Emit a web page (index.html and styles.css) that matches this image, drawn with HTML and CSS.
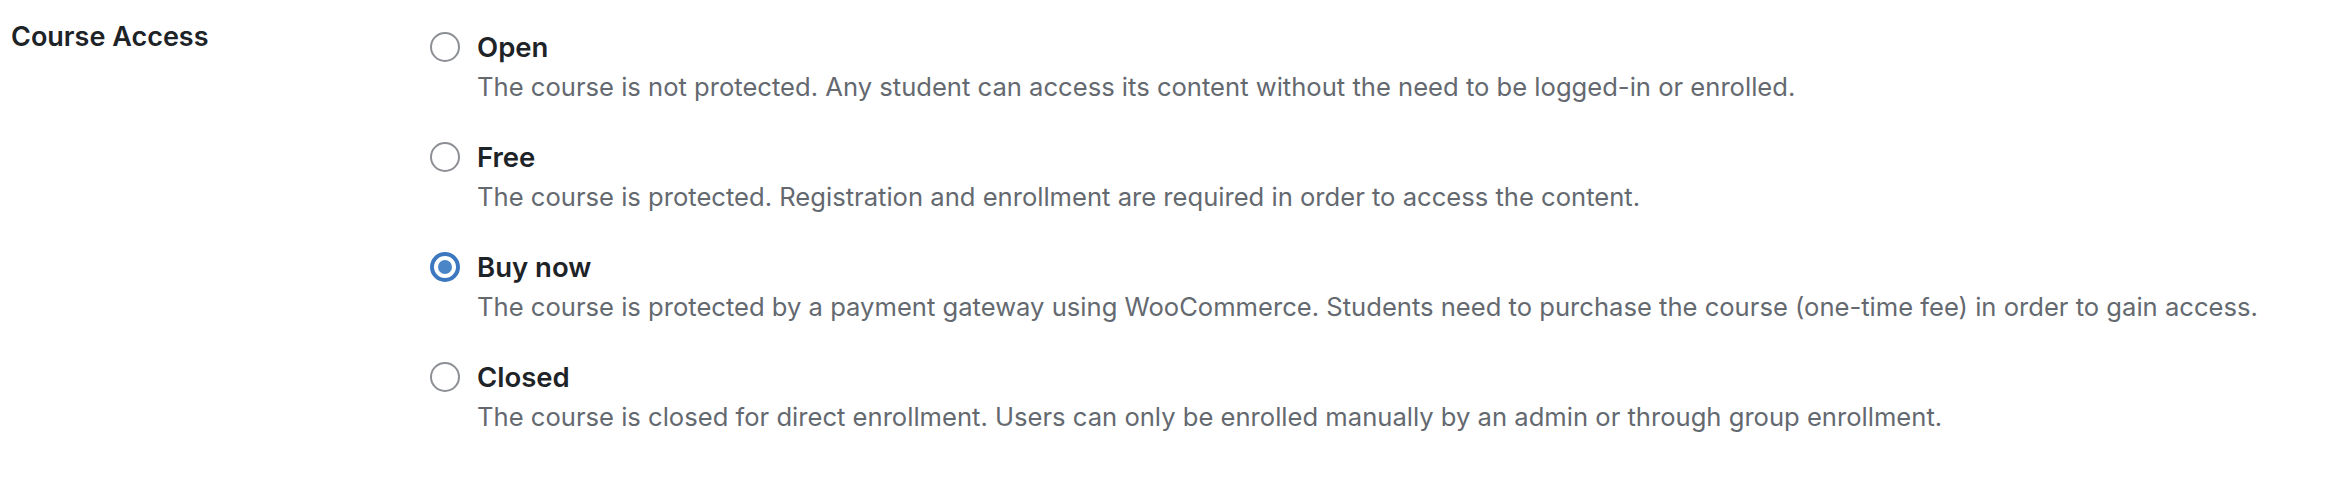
FILE: index.html
```html
<!DOCTYPE html>
<html lang="en">
<head>
<meta charset="utf-8">
<title>Course Access</title>
<link rel="stylesheet" href="styles.css">
</head>
<body>
<div class="setting">
  <div class="setting-label">Course Access</div>
  <div class="options">
    <label class="option">
      <span class="radio"></span>
      <span class="option-text">
        <span class="option-title">Open</span>
        <span class="option-desc">The course is not protected. Any student can access its content without the need to be logged-in or enrolled.</span>
      </span>
    </label>
    <label class="option">
      <span class="radio"></span>
      <span class="option-text">
        <span class="option-title">Free</span>
        <span class="option-desc">The course is protected. Registration and enrollment are required in order to access the content.</span>
      </span>
    </label>
    <label class="option">
      <span class="radio radio-checked"></span>
      <span class="option-text">
        <span class="option-title">Buy now</span>
        <span class="option-desc">The course is protected by a payment gateway using WooCommerce. Students need to purchase the course (one-time fee) in order to gain access.</span>
      </span>
    </label>
    <label class="option">
      <span class="radio"></span>
      <span class="option-text">
        <span class="option-title">Closed</span>
        <span class="option-desc">The course is closed for direct enrollment. Users can only be enrolled manually by an admin or through group enrollment.</span>
      </span>
    </label>
  </div>
</div>
</body>
</html>
```
FILE: styles.css
```css
html, body {
  margin: 0;
  padding: 0;
  background: #ffffff;
}
body {
  font-family: Inter, "Noto Sans", "Liberation Sans", sans-serif;
  color: #1d2327;
}
.setting {
  display: flex;
  align-items: flex-start;
}
.setting-label {
  width: 419px;
  padding: 17px 0 0 11px;
  font-size: 27px;
  font-weight: 600;
  line-height: 39px;
  color: #1d2327;
}
.options {
  display: flex;
  flex-direction: column;
  gap: 32px;
  padding-top: 28px;
}
.option {
  display: flex;
  align-items: flex-start;
  gap: 17px;
}
.radio {
  box-sizing: border-box;
  flex: none;
  width: 30px;
  height: 30px;
  margin-top: 4px;
  border: 2px solid #8c8f94;
  border-radius: 50%;
  background: #fff;
  display: flex;
  align-items: center;
  justify-content: center;
}
.radio-checked {
  border: 4px solid #3b78bf;
}
.radio-checked::before {
  content: "";
  width: 14px;
  height: 14px;
  border-radius: 50%;
  background: #4a85c8;
}
.option-text {
  display: flex;
  flex-direction: column;
}
.option-title {
  font-size: 27.5px;
  font-weight: 600;
  line-height: 39px;
  color: #1d2327;
}
.option-desc {
  font-size: 25.6px;
  line-height: 39px;
  color: #646970;
}
```
